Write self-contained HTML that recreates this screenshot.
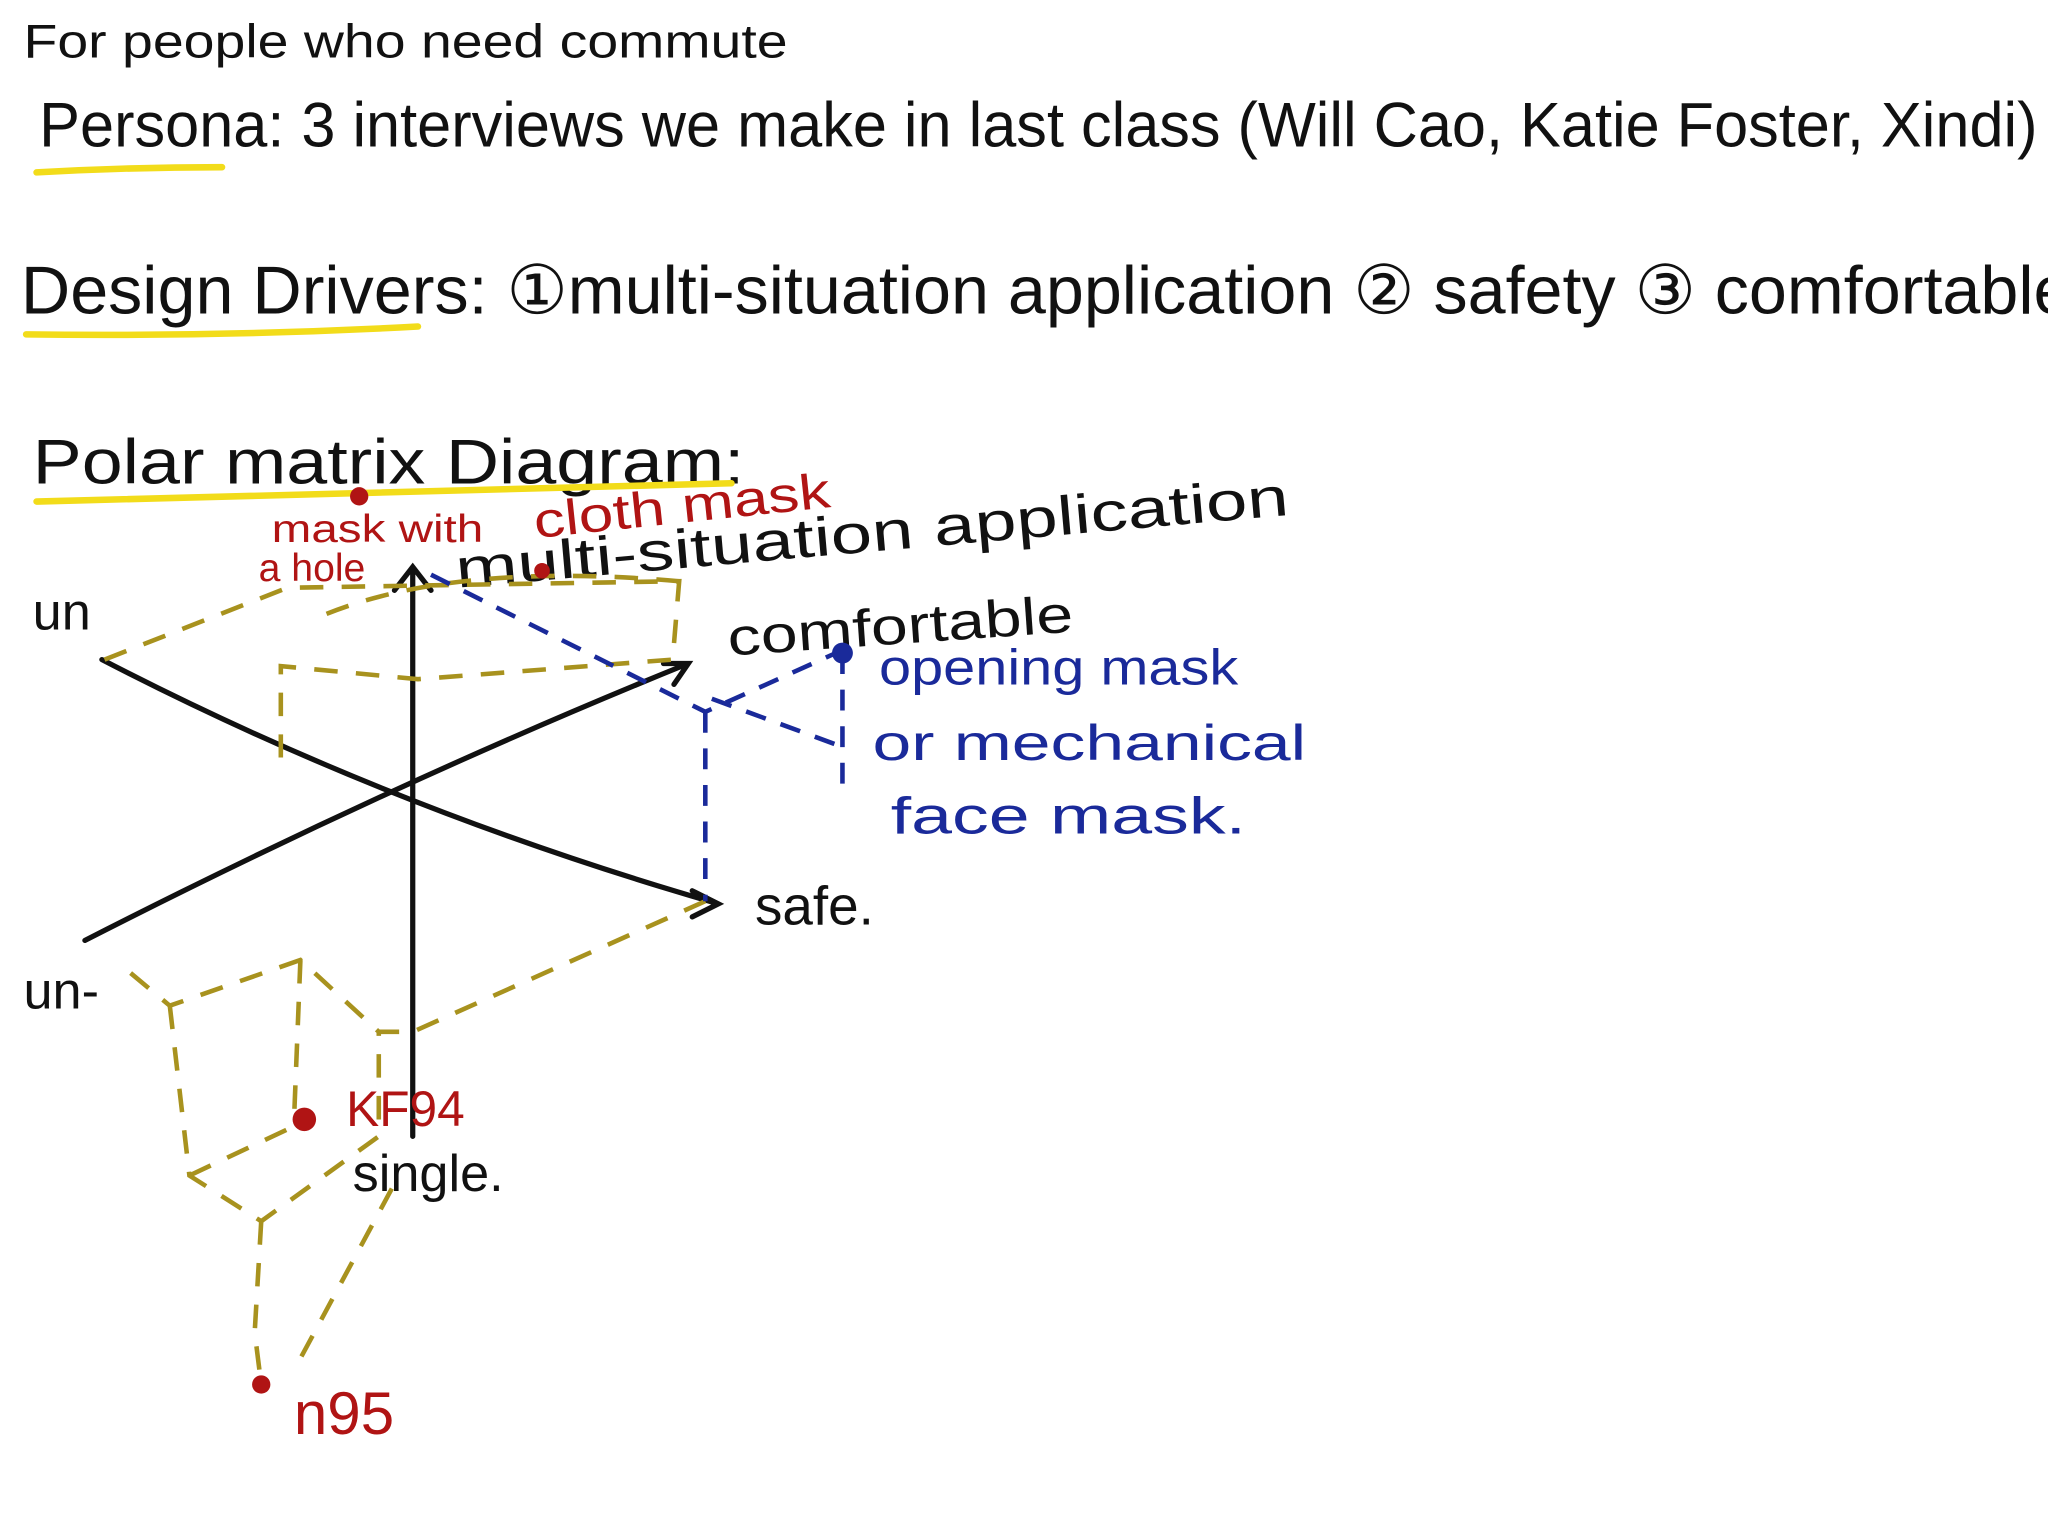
<!DOCTYPE html>
<html><head><meta charset="utf-8"><style>
html,body{margin:0;padding:0;background:#fff;overflow:hidden;}
svg{display:block;}
text{font-family:"Liberation Sans",sans-serif;}
</style></head><body>
<svg width="2048" height="1536" viewBox="0 0 1568 1176" preserveAspectRatio="none" xmlns="http://www.w3.org/2000/svg">
<rect width="1568" height="1176" fill="#fff"/>
<g fill="#111">
<text x="18" y="44" font-size="36" textLength="585" lengthAdjust="spacingAndGlyphs">For people who need commute</text>
<text x="30" y="112" font-size="48" textLength="1530" lengthAdjust="spacingAndGlyphs">Persona: 3 interviews we make in last class (Will Cao, Katie Foster, Xindi)</text>
<text x="16" y="240" font-size="52" textLength="1570" lengthAdjust="spacingAndGlyphs">Design Drivers: ①multi-situation application ② safety  ③ comfortable</text>
<text x="25" y="370" font-size="48" textLength="545" lengthAdjust="spacingAndGlyphs">Polar matrix  Diagram:</text>
<text x="25" y="482" font-size="40">un</text>
<text x="18" y="772" font-size="40">un-</text>
<text x="350" y="450" font-size="42" transform="rotate(-5 350 450)" textLength="640" lengthAdjust="spacingAndGlyphs">multi-situation application</text>
<text x="558" y="502" font-size="40" transform="rotate(-4 558 502)" textLength="265" lengthAdjust="spacingAndGlyphs">comfortable</text>
<text x="578" y="708" font-size="42">safe.</text>
<text x="270" y="912" font-size="40">single.</text>
</g>
<g stroke="#f2dc1a" stroke-width="5" fill="none" stroke-linecap="round">
<path d="M28 132 Q100 128 170 128"/>
<path d="M20 256 Q170 258 320 250"/>
<path d="M28 384 Q300 378 560 370"/>
</g>
<g stroke="#111" stroke-width="4" fill="none" stroke-linecap="round">
<path d="M316 870 L316 436 M302 452 L316 434 L330 452"/>
<path d="M78 505 Q300 620 550 692 M530 682 L550 692 L530 702"/>
<path d="M65 720 Q300 600 527 508 M508 508 L527 508 L516 524"/>
</g>
<g stroke="#a8921e" stroke-width="3.5" fill="none" stroke-dasharray="18 14">
<path d="M80 505 L220 450 L520 445 L515 505 L320 520 L215 510 L215 580"/>
<path d="M250 470 Q350 430 520 445"/>
<path d="M100 745 L130 770 L230 735 L290 790 L316 790 L540 690"/>
<path d="M130 770 L145 900 L200 935 L290 870 L290 790"/>
<path d="M230 735 L225 860 M145 900 L230 860"/>
<path d="M200 935 L195 1020 L200 1060 M300 910 L230 1040"/>
</g>
<g stroke="#1a2a9a" stroke-width="3.5" fill="none" stroke-dasharray="16 12">
<path d="M330 440 L500 525 L540 545 L640 500"/>
<path d="M540 545 L540 690 M545 535 L640 570"/>
<path d="M645 500 L645 610"/>
</g>
<g fill="#b01414">
<circle cx="275" cy="380" r="7"/><circle cx="415" cy="437" r="6"/>
<circle cx="233" cy="857" r="9"/><circle cx="200" cy="1060" r="7"/>
<text x="208" y="415" font-size="30" textLength="162" lengthAdjust="spacingAndGlyphs">mask with</text>
<text x="198" y="445" font-size="30">a hole</text>
<text x="410" y="412" font-size="38" transform="rotate(-6 410 412)" textLength="228" lengthAdjust="spacingAndGlyphs">cloth mask</text>
<text x="265" y="862" font-size="38">KF94</text>
<text x="225" y="1098" font-size="46">n95</text>
</g>
<g fill="#1a2a9a">
<circle cx="645" cy="500" r="8"/>
<text x="673" y="524" font-size="38" textLength="275" lengthAdjust="spacingAndGlyphs">opening mask</text>
<text x="668" y="582" font-size="38" textLength="332" lengthAdjust="spacingAndGlyphs">or mechanical</text>
<text x="682" y="638" font-size="40" textLength="272" lengthAdjust="spacingAndGlyphs">face mask.</text>
</g>
</svg>
</body></html>
